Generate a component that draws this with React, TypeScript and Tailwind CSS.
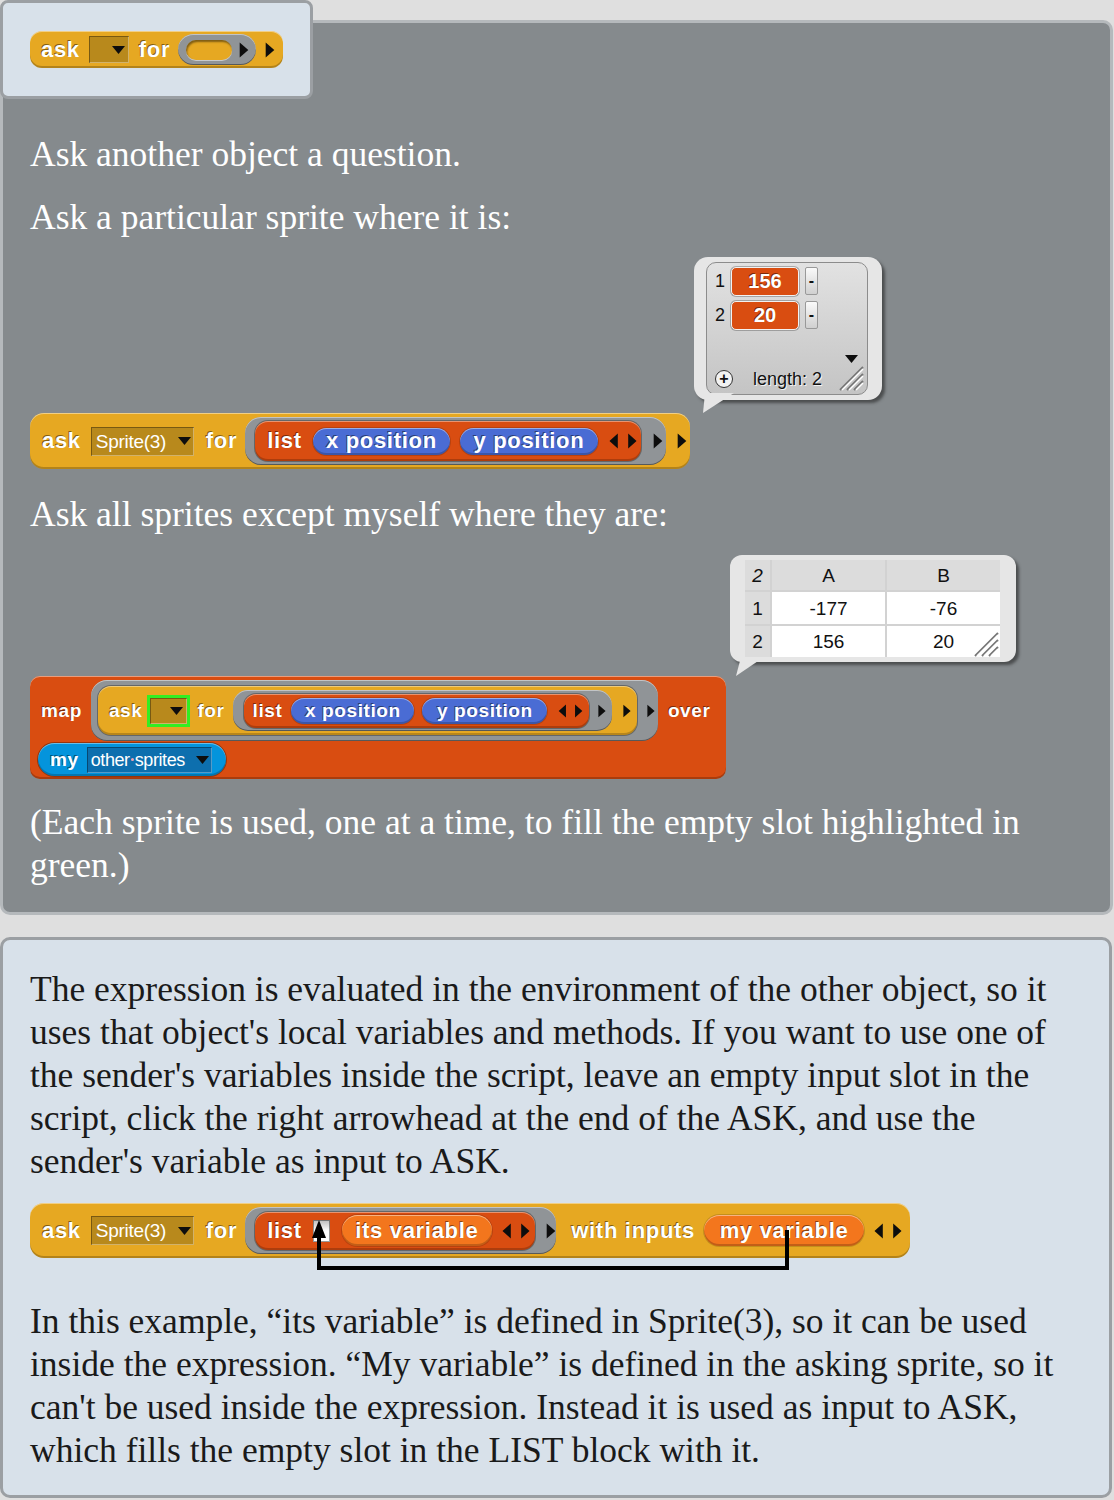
import React from "react";

type C = { children?: React.ReactNode; className?: string };

const LBL =
  "font-['Liberation_Sans',Arial,sans-serif] font-bold text-white leading-none whitespace-nowrap [text-shadow:-1px_-1px_0_rgba(0,0,0,0.45)]";
const SERIF = "font-['Liberation_Serif','Times_New_Roman',serif]";
const BEVEL =
  "shadow-[inset_0_1px_0_rgba(255,255,255,0.45),inset_0_-2px_0_rgba(0,0,0,0.22)]";
const INNER =
  "shadow-[0_0_0_1px_rgba(0,0,0,0.3),inset_0_1px_0_rgba(255,255,255,0.4),inset_0_-2px_0_rgba(0,0,0,0.2)]";
const RING =
  "bg-[#909497] shadow-[inset_0_1px_0_rgba(255,255,255,0.45),inset_0_-1px_0_rgba(0,0,0,0.4)]";
const SLOTY =
  "bg-[#b8891c] shadow-[inset_1px_1px_0_rgba(0,0,0,0.35),inset_-1px_-1px_0_rgba(255,255,255,0.35)]";
const PILL =
  "shadow-[0_0_0_1px_rgba(0,0,0,0.15),inset_0_1px_0_rgba(255,255,255,0.45),inset_0_-2px_0_rgba(0,0,0,0.2)]";

function Lg({ children, className = "" }: C) {
  return <span className={`${LBL} text-[22px] tracking-[0.7px] ${className}`}>{children}</span>;
}
function Sm({ children, className = "" }: C) {
  return <span className={`${LBL} text-[19px] tracking-[0.6px] ${className}`}>{children}</span>;
}

function RArrow({ h = 15, className = "" }: { h?: number; className?: string }) {
  return (
    <svg width={Math.round(h * 0.6)} height={h} viewBox="0 0 6 10" className={`shrink-0 ${className}`}>
      <path d="M0.3 0.3 L5.7 5 L0.3 9.7 Z" fill="#0d0d0d" />
    </svg>
  );
}
function LR({ h = 15, className = "" }: { h?: number; className?: string }) {
  return (
    <svg width={Math.round(h * 1.75)} height={h} viewBox="0 0 17.5 10" className={`shrink-0 ${className}`}>
      <path d="M5.5 0.3 L0.3 5 L5.5 9.7 Z M12 0.3 L17.2 5 L12 9.7 Z" fill="#0d0d0d" />
    </svg>
  );
}
function Down({ className = "" }: { className?: string }) {
  return (
    <svg width="13" height="8" viewBox="0 0 13 8" className={`shrink-0 ${className}`}>
      <path d="M0 0 L13 0 L6.5 8 Z" fill="#0d0d0d" />
    </svg>
  );
}

function SpriteSlot({ className = "" }: C) {
  return (
    <div className={`flex items-center h-[29px] w-[103px] pl-[5px] pr-[3px] ${SLOTY} ${className}`}>
      <span className="font-['Liberation_Sans',Arial,sans-serif] text-[19px] leading-none text-white whitespace-nowrap tracking-[-0.3px]">
        Sprite(3)
      </span>
      <Down className="ml-auto" />
    </div>
  );
}

function ResizeHandle({ className = "" }: { className?: string }) {
  return (
    <svg width="26" height="26" viewBox="0 0 26 26" className={className}>
      <path d="M2 25 L25 2 M9 25 L25 9 M16 25 L25 16" stroke="#777" strokeWidth="2" />
      <path d="M4 25 L25 4 M11 25 L25 11 M18 25 L25 18" stroke="#fff" strokeWidth="1.5" />
    </svg>
  );
}

function ListWatcher() {
  return (
    <div className="relative ml-[664px] mt-[18px] w-[188px] h-[143px]">
      <div className="relative w-full h-full rounded-[14px] bg-[#e6e6e6] shadow-[3px_3px_3px_rgba(30,30,30,0.55)] pl-[12px] pr-[14px] py-[5px]">
        <div className="relative h-full rounded-[10px] border border-[#8c8c8c] bg-gradient-to-b from-[#e2e2e2] to-[#c4c4c4] flex flex-col pl-[8px] pt-[3px] font-['Liberation_Sans',Arial,sans-serif]">
          {[
            ["1", "156"],
            ["2", "20"],
          ].map(([i, v], k) => (
            <div key={i} className={`flex items-center h-[30px] ${k === 1 ? "mt-[4px]" : ""}`}>
              <span className="w-[16px] text-[18px] leading-none text-[#111]">{i}</span>
              <div className="flex items-center justify-center w-[68px] h-[29px] rounded-[5px] bg-[#d94d11] border border-[#f2f2f2] shadow-[0_0_0_1px_rgba(0,0,0,0.25)]">
                <span className={`${LBL} text-[20px]`}>{v}</span>
              </div>
              <div className="ml-[6px] flex items-center justify-center w-[13px] h-[28px] rounded-[2px] border border-[#999] bg-gradient-to-b from-[#fafafa] to-[#d0d0d0]">
                <span className="text-[16px] font-bold leading-none text-[#111]">-</span>
              </div>
            </div>
          ))}
          <div className="mt-auto mb-[6px] flex items-center">
            <div className="flex items-center justify-center w-[18px] h-[18px] rounded-full border-[1.5px] border-[#333] bg-[#f2f2f2] text-[16px] font-bold leading-none text-[#111]">
              +
            </div>
            <span className="ml-[20px] text-[18px] leading-none text-[#111] [text-shadow:1px_1px_0_rgba(255,255,255,0.8)]">
              length: 2
            </span>
          </div>
          <Down className="absolute right-[9px] top-[92px]" />
          <ResizeHandle className="absolute right-[3px] bottom-[3px]" />
        </div>
      </div>
      <svg className="absolute left-[4px] top-[136px]" width="40" height="22" viewBox="0 0 40 22">
        <path d="M7 0 L36 0 L5 20 Z" fill="#e6e6e6" />
      </svg>
    </div>
  );
}

function TableWatcher() {
  const cell = "flex items-center justify-center text-[19px] leading-none text-[#111]";
  return (
    <div className="relative ml-[700px] mt-[19px] w-[286px] h-[107px]">
      <div className="relative w-full h-full rounded-[12px] bg-[#e6e6e6] shadow-[3px_3px_3px_rgba(30,30,30,0.55)] pl-[15px] pt-[5px] font-['Liberation_Sans',Arial,sans-serif]">
        <div className="grid grid-cols-[25px_113px_113px] grid-rows-[30px_32px_31px] gap-[2px] bg-[#d2d2d2] w-[255px]">
          <div className={`${cell} bg-[#dcdcdc] italic`}>2</div>
          <div className={`${cell} bg-[#dcdcdc]`}>A</div>
          <div className={`${cell} bg-[#dcdcdc]`}>B</div>
          <div className={`${cell} bg-[#dcdcdc]`}>1</div>
          <div className={`${cell} bg-white`}>-177</div>
          <div className={`${cell} bg-white`}>-76</div>
          <div className={`${cell} bg-[#dcdcdc]`}>2</div>
          <div className={`${cell} bg-white`}>156</div>
          <div className={`${cell} bg-white`}>20</div>
        </div>
        <ResizeHandle className="absolute right-[17px] bottom-[5px]" />
      </div>
      <svg className="absolute left-[2px] top-[102px]" width="40" height="22" viewBox="0 0 40 22">
        <path d="M9 0 L32 0 L4 19 Z" fill="#e6e6e6" />
      </svg>
    </div>
  );
}

export default function App() {
  return (
    <div className="relative w-[1114px] h-[1500px] bg-[#dfdfdf] overflow-hidden pt-[20px]">
      {/* tab */}
      <div className="absolute left-0 top-0 z-10 w-[313px] h-[99px] rounded-[8px] border-[3px] border-[#9b9fa3] bg-[#d8e1ea] pl-[27px] pt-[28px]">
        <div className={`flex items-center h-[37px] w-[253px] bg-[#e6a822] rounded-[12px] pl-[11px] ${BEVEL}`}>
          <Lg>ask</Lg>
          <div className={`ml-[9px] flex items-center justify-end w-[40px] h-[27px] pr-[4px] ${SLOTY}`}>
            <Down />
          </div>
          <Lg className="ml-[10px]">for</Lg>
          <div className={`ml-[8px] flex items-center w-[78px] h-[31px] rounded-full pl-[8px] ${RING}`}>
            <div className="w-[46px] h-[20px] rounded-full bg-[#e6a822] shadow-[inset_1px_2px_2px_rgba(0,0,0,0.45),0_1px_0_rgba(255,255,255,0.5)]" />
            <RArrow h={16} className="ml-[7px]" />
          </div>
          <RArrow h={16} className="ml-[9px]" />
        </div>
      </div>

      {/* gray panel */}
      <div className={`w-[1113px] h-[895px] rounded-[10px] border-[3px] border-[#b5b9bc] bg-[#858a8d] pl-[27px] pt-[110px] ${SERIF}`}>
        <p className="text-[35.5px] leading-[43px] text-white whitespace-nowrap">Ask another object a question.</p>
        <p className="mt-[20px] text-[35.5px] leading-[43px] text-white whitespace-nowrap">
          Ask a particular sprite where it is:
        </p>

        <ListWatcher />

        {/* ask Sprite(3) for list */}
        <div className={`mt-[13px] flex items-center h-[56px] w-[660px] bg-[#e6a822] rounded-[14px] pl-[12px] ${BEVEL}`}>
          <Lg>ask</Lg>
          <SpriteSlot className="ml-[10px]" />
          <Lg className="ml-[12px]">for</Lg>
          <div className={`ml-[8px] flex items-center h-[48px] w-[421px] rounded-[16px] pl-[10px] ${RING}`}>
            <div className={`flex items-center h-[40px] w-[386px] rounded-[13px] bg-[#d94d11] pl-[12px] ${INNER}`}>
              <Lg>list</Lg>
              <div className={`ml-[11px] flex items-center justify-center h-[27px] w-[137px] rounded-full bg-[#4a6cd4] ${PILL}`}>
                <Lg>x position</Lg>
              </div>
              <div className={`ml-[10px] flex items-center justify-center h-[27px] w-[138px] rounded-full bg-[#4a6cd4] ${PILL}`}>
                <Lg>y position</Lg>
              </div>
              <LR h={16} className="ml-[11px]" />
            </div>
            <RArrow h={16} className="ml-[12px]" />
          </div>
          <RArrow h={16} className="ml-[11px]" />
        </div>

        <p className="mt-[24px] text-[35.5px] leading-[43px] text-white whitespace-nowrap">
          Ask all sprites except myself where they are:
        </p>

        <TableWatcher />

        {/* map block */}
        <div className={`mt-[14px] flex flex-col w-[696px] h-[103px] rounded-[10px] bg-[#d94d11] pl-[8px] pt-[4px] ${BEVEL}`}>
          <div className="flex items-center h-[61px]">
            <Sm className="ml-[3px]">map</Sm>
            <div className={`ml-[9px] flex items-center h-[61px] w-[567px] rounded-[16px] pl-[7px] ${RING}`}>
              <div className={`flex items-center h-[49px] w-[539px] rounded-[13px] bg-[#e6a822] pl-[11px] ${INNER}`}>
                <Sm>ask</Sm>
                <div className={`ml-[5px] flex items-center justify-end w-[43px] h-[32px] pr-[4px] border-[3px] border-[#33ee22] ${SLOTY}`}>
                  <Down />
                </div>
                <Sm className="ml-[7px]">for</Sm>
                <div className={`ml-[8px] flex items-center h-[41px] w-[379px] rounded-[15px] pl-[11px] ${RING}`}>
                  <div className={`flex items-center h-[34px] w-[345px] rounded-[12px] bg-[#d94d11] pl-[9px] ${INNER}`}>
                    <Sm>list</Sm>
                    <div className={`ml-[9px] flex items-center justify-center h-[26px] w-[123px] rounded-full bg-[#4a6cd4] ${PILL}`}>
                      <Sm>x position</Sm>
                    </div>
                    <div className={`ml-[8px] flex items-center justify-center h-[26px] w-[125px] rounded-full bg-[#4a6cd4] ${PILL}`}>
                      <Sm>y position</Sm>
                    </div>
                    <LR h={14} className="ml-[11px]" />
                  </div>
                  <RArrow h={14} className="ml-[9px]" />
                </div>
                <RArrow h={14} className="ml-[11px]" />
              </div>
              <RArrow h={14} className="ml-[10px]" />
            </div>
            <Sm className="ml-[10px]">over</Sm>
          </div>
          <div className={`mt-[2px] flex items-center h-[33px] w-[188px] rounded-full bg-[#0494dc] pl-[12px] ${INNER}`}>
            <Sm>my</Sm>
            <div className="ml-[8px] flex items-center w-[125px] h-[26px] pl-[4px] pr-[3px] bg-[#0d6fae] shadow-[inset_1px_1px_0_rgba(0,0,0,0.35),inset_-1px_-1px_0_rgba(255,255,255,0.3)]">
              <span className="font-['Liberation_Sans',Arial,sans-serif] text-[18px] leading-none text-white whitespace-nowrap tracking-[-0.4px] flex items-center">
                other
                <span className="inline-block w-[3px] h-[3px] rounded-full bg-[#f0a0b0] mx-[1px]" />
                sprites
              </span>
              <Down className="ml-auto" />
            </div>
          </div>
        </div>

        <p className="mt-[22px] text-[35.5px] leading-[43px] text-white whitespace-nowrap">
          (Each sprite is used, one at a time, to fill the empty slot highlighted in
          <br />
          green.)
        </p>
      </div>

      {/* bottom panel */}
      <div className={`mt-[22px] w-[1112px] h-[561px] rounded-[10px] border-[3px] border-[#9b9fa3] bg-[#d8e1ea] pl-[27px] pt-[28px] ${SERIF}`}>
        <p className="text-[35.5px] leading-[43px] text-[#1a1a1a] whitespace-nowrap">
          The expression is evaluated in the environment of the other object, so it
          <br />
          uses that object's local variables and methods. If you want to use one of
          <br />
          the sender's variables inside the script, leave an empty input slot in the
          <br />
          script, click the right arrowhead at the end of the ASK, and use the
          <br />
          sender's variable as input to ASK.
        </p>

        <div className="relative mt-[20px] w-[880px] h-[67px]">
          <div className={`flex items-center h-[55px] w-[880px] bg-[#e6a822] rounded-[14px] pl-[12px] ${BEVEL}`}>
            <Lg>ask</Lg>
            <SpriteSlot className="ml-[10px]" />
            <Lg className="ml-[12px]">for</Lg>
            <div className={`ml-[8px] flex items-center h-[47px] w-[311px] rounded-[16px] pl-[10px] ${RING}`}>
              <div className={`flex items-center h-[38px] w-[280px] rounded-[13px] bg-[#d94d11] pl-[12px] ${INNER}`}>
                <Lg>list</Lg>
                <div className="ml-[11px] w-[17px] h-[22px] bg-gradient-to-b from-[#bbbbbb] via-white to-white shadow-[inset_0_0_0_1px_rgba(0,0,0,0.4)]" />
                <div className={`ml-[12px] flex items-center justify-center h-[31px] w-[150px] rounded-full bg-[#f3761d] ${PILL}`}>
                  <Lg>its variable</Lg>
                </div>
                <LR h={16} className="ml-[10px]" />
              </div>
              <RArrow h={16} className="ml-[11px]" />
            </div>
            <Lg className="ml-[15px]">with inputs</Lg>
            <div className={`ml-[9px] flex items-center justify-center h-[31px] w-[160px] rounded-full bg-[#f3761d] ${PILL}`}>
              <Lg>my variable</Lg>
            </div>
            <LR h={16} className="ml-[10px]" />
          </div>
          <svg className="absolute left-0 top-0 pointer-events-none" width="880" height="70" viewBox="0 0 880 70">
            <path d="M289 32 L289 65 L757 65 L757 27" fill="none" stroke="#000" strokeWidth="4" strokeLinejoin="miter" />
            <path d="M289 17 L282 35 L296 35 Z" fill="#000" />
          </svg>
        </div>

        <p className="mt-[30px] text-[35.5px] leading-[43px] text-[#1a1a1a] whitespace-nowrap">
          In this example, “its variable” is defined in Sprite(3), so it can be used
          <br />
          inside the expression. “My variable” is defined in the asking sprite, so it
          <br />
          can't be used inside the expression. Instead it is used as input to ASK,
          <br />
          which fills the empty slot in the LIST block with it.
        </p>
      </div>
    </div>
  );
}
